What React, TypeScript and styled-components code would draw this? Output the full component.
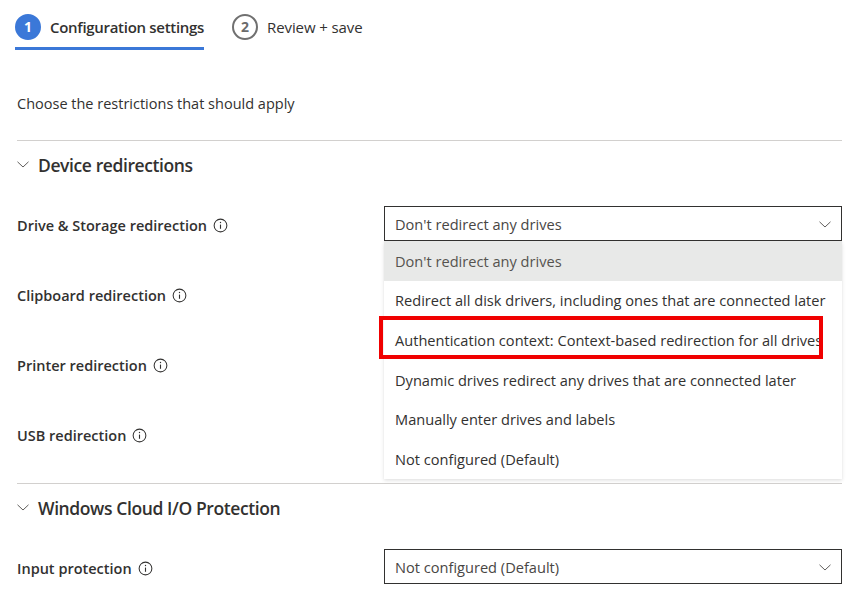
import React from "react";
import styled, { createGlobalStyle } from "styled-components";

const GlobalStyle = createGlobalStyle`
  body {
    margin: 0;
    background: #ffffff;
    font-family: "Segoe UI", "Open Sans", "Noto Sans", sans-serif;
    color: #323130;
  }
`;

const Page = styled.div`
  width: 868px;
  height: 597px;
  overflow: hidden;
  padding: 0 26px 0 17px;
  box-sizing: border-box;
`;

const Steps = styled.div`
  display: flex;
  gap: 28px;
  margin-left: -2px;
  height: 50px;
`;

const Step = styled.div<{ active?: boolean }>`
  display: flex;
  align-items: center;
  gap: 9px;
  height: 41px;
  padding-top: 6px;
  border-bottom: 3px solid ${(p) => (p.active ? "#3b78d8" : "transparent")};
  font-size: 15px;
  font-weight: ${(p) => (p.active ? 600 : 400)};
  letter-spacing: ${(p) => (p.active ? "-0.3px" : "-0.1px")};
  color: #323130;
`;

const StepNum = styled.span<{ active?: boolean }>`
  width: 26px;
  height: 26px;
  box-sizing: border-box;
  border-radius: 50%;
  display: inline-flex;
  align-items: center;
  justify-content: center;
  font-size: 14px;
  font-weight: 700;
  letter-spacing: 0;
  background: ${(p) => (p.active ? "#3b78d8" : "#ffffff")};
  color: ${(p) => (p.active ? "#ffffff" : "#6b6b6b")};
  border: 2px solid ${(p) => (p.active ? "#3b78d8" : "#707070")};
`;

const Intro = styled.p`
  margin: 44px 0 26px;
  font-size: 14.5px;
  line-height: 20px;
`;

const Section = styled.section`
  border-top: 1px solid #d2d0ce;
`;

const SectionHeader = styled.div`
  display: flex;
  align-items: center;
  gap: 9px;
  height: 47px;
  font-size: 17.5px;
  font-weight: 600;
  letter-spacing: -0.4px;
`;

const Rows = styled.div`
  display: flex;
  flex-direction: column;
  gap: 35px;
  padding: 18px 0 32px;
`;

const Row = styled.div`
  display: grid;
  grid-template-columns: 367px 1fr;
  align-items: center;
  height: 35px;
`;

const Label = styled.div`
  display: flex;
  align-items: center;
  gap: 6px;
  padding-top: 3px;
  font-size: 14.5px;
  font-weight: 600;
`;

const Field = styled.div`
  position: relative;
  height: 35px;
`;

const Select = styled.div`
  display: flex;
  align-items: center;
  justify-content: space-between;
  height: 35px;
  box-sizing: border-box;
  border: 1px solid #323130;
  padding: 1px 10px 0 10px;
  font-size: 14.6px;
  color: #484644;
`;

const Menu = styled.ul`
  position: absolute;
  top: 35px;
  left: 0;
  right: 0;
  margin: 0;
  padding: 0;
  list-style: none;
  background: #ffffff;
  box-shadow: 0 1.6px 3.6px rgba(0, 0, 0, 0.13), 0 0.3px 0.9px rgba(0, 0, 0, 0.11);
  z-index: 2;
`;

const Option = styled.li<{ selected?: boolean }>`
  height: 39.6px;
  display: flex;
  align-items: center;
  padding: 0 11px;
  font-size: 14.6px;
  white-space: nowrap;
  overflow: hidden;
  background: ${(p) => (p.selected ? "#e8e9e8" : "transparent")};
  color: ${(p) => (p.selected ? "#55534f" : "#323130")};
`;

const Highlight = styled.div`
  position: absolute;
  left: -5px;
  top: 75px;
  width: 444px;
  height: 43px;
  box-sizing: border-box;
  border: 4px solid #f00000;
`;

const Info = () => (
  <svg width="15" height="15" viewBox="0 0 16 16" fill="none">
    <circle cx="8" cy="8" r="6.8" stroke="#323130" strokeWidth="1.1" />
    <line x1="8" y1="7" x2="8" y2="11.5" stroke="#323130" strokeWidth="1.2" />
    <circle cx="8" cy="4.8" r="0.75" fill="#323130" />
  </svg>
);

const Chevron = ({ size = 12 }: { size?: number }) => (
  <svg width={size} height={size / 2 + 1} viewBox="0 0 12 7" fill="none">
    <path d="M0.5 0.8 L6 6 L11.5 0.8" stroke="#605e5c" strokeWidth="1" />
  </svg>
);

const driveOptions = [
  "Don't redirect any drives",
  "Redirect all disk drivers, including ones that are connected later",
  "Authentication context: Context-based redirection for all drives",
  "Dynamic drives redirect any drives that are connected later",
  "Manually enter drives and labels",
  "Not configured (Default)",
];

export default function App() {
  return (
    <Page>
      <GlobalStyle />
      <Steps>
        <Step active>
          <StepNum active>1</StepNum>
          Configuration settings
        </Step>
        <Step>
          <StepNum>2</StepNum>
          Review + save
        </Step>
      </Steps>

      <Intro>Choose the restrictions that should apply</Intro>

      <Section>
        <SectionHeader>
          <Chevron />
          Device redirections
        </SectionHeader>
        <Rows>
          <Row>
            <Label>
              Drive &amp; Storage redirection <Info />
            </Label>
            <Field>
              <Select>
                Don't redirect any drives
                <Chevron />
              </Select>
              <Menu>
                {driveOptions.map((o, i) => (
                  <Option key={o} selected={i === 0}>
                    {o}
                  </Option>
                ))}
                <Highlight />
              </Menu>
            </Field>
          </Row>
          <Row>
            <Label>
              Clipboard redirection <Info />
            </Label>
          </Row>
          <Row>
            <Label>
              Printer redirection <Info />
            </Label>
          </Row>
          <Row>
            <Label>
              USB redirection <Info />
            </Label>
          </Row>
        </Rows>
      </Section>

      <Section>
        <SectionHeader>
          <Chevron />
          Windows Cloud I/O Protection
        </SectionHeader>
        <Rows>
          <Row>
            <Label>
              Input protection <Info />
            </Label>
            <Field>
              <Select>
                Not configured (Default)
                <Chevron />
              </Select>
            </Field>
          </Row>
        </Rows>
      </Section>
    </Page>
  );
}
